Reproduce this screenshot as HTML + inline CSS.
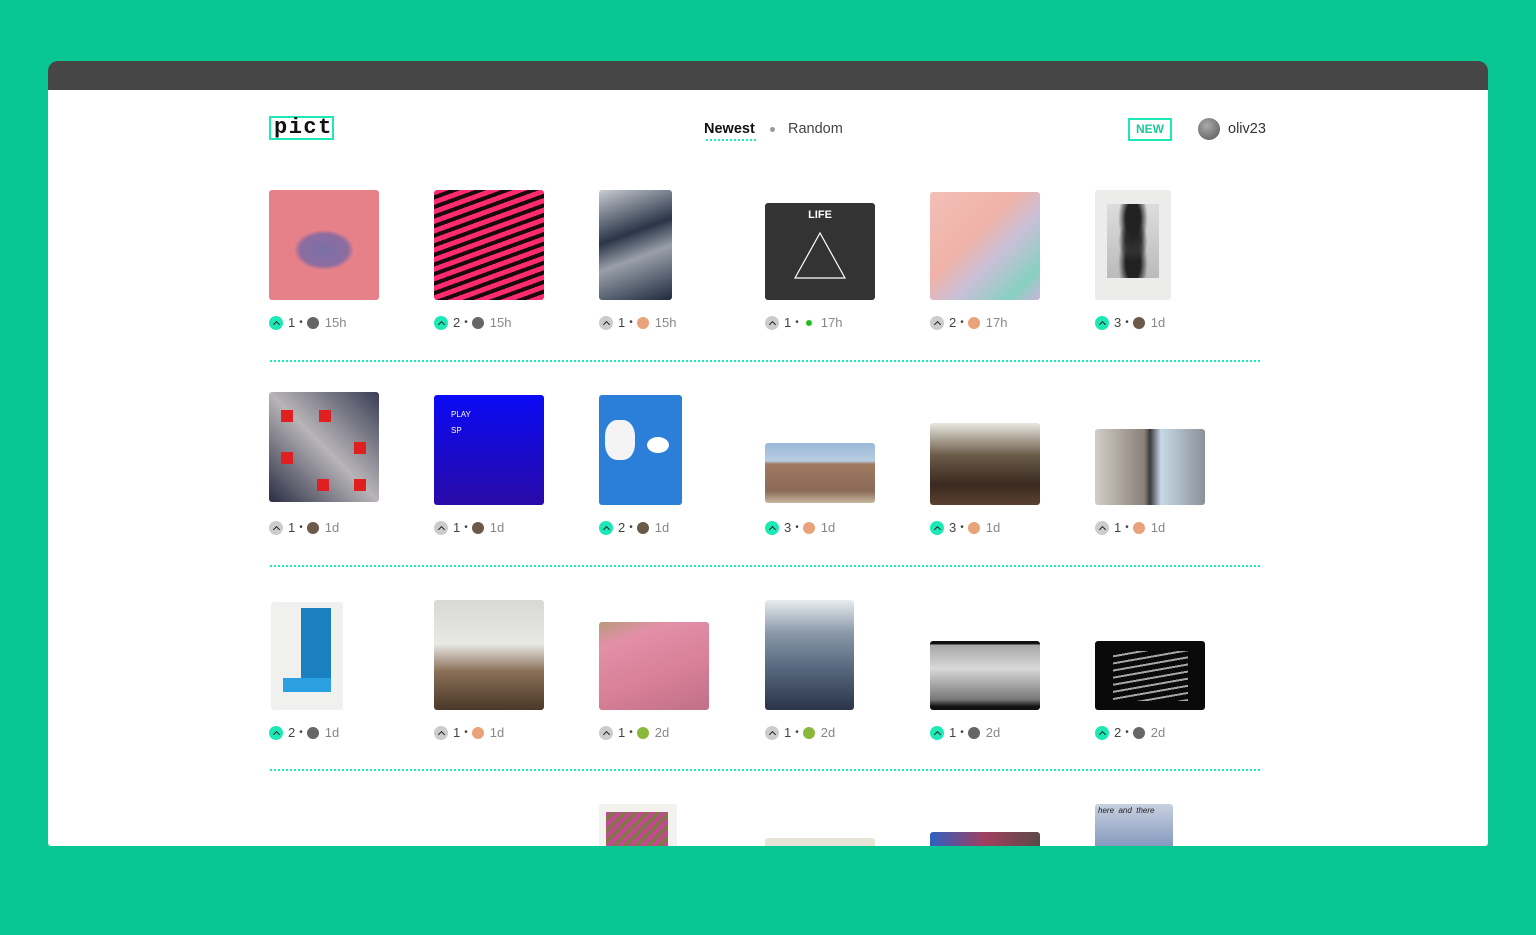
<!DOCTYPE html>
<html><head><meta charset="utf-8"><style>
*{margin:0;padding:0;box-sizing:border-box}
body{width:1536px;height:935px;background:#08c793;position:relative;overflow:hidden;font-family:"Liberation Sans",sans-serif}
#bar{position:absolute;left:48px;top:61px;width:1440px;height:30px;background:#464646;border-radius:10px 10px 0 0}
#win{position:absolute;left:48px;top:90px;width:1440px;height:756px;background:#fff;overflow:hidden;border-radius:0 0 3px 3px}
.a{position:absolute}
.logo{left:221px;top:26px;width:65px;height:24px;border:2px solid #1de9b6;font-family:"Liberation Mono",monospace;font-size:22px;line-height:19px;letter-spacing:1.5px;padding-left:3px;color:#111;font-weight:bold}
.nav{font-size:14.5px;top:31px;color:#444}
.img{position:absolute;border-radius:3px;overflow:hidden}
.m{position:absolute;font-size:13px;color:#444;height:16px;line-height:16px;display:flex;align-items:center}
.up{width:14px;height:14px;border-radius:50%;background:#ccc;display:inline-flex;align-items:center;justify-content:center;margin-right:5px}
.up.g{background:#1de9b6}
.up::after{content:"";width:4px;height:4px;border-left:1.5px solid #222;border-top:1.5px solid #222;transform:translateY(1px) rotate(45deg)}
.dt{margin:0 4px;font-size:10px}
.av{width:12px;height:12px;border-radius:50%;margin-right:6px}
.t{color:#888}
.hr{position:absolute;left:222px;width:990px;border-top:2px dotted #1de9b6}
</style></head><body>
<div id="bar"></div>
<div id="win">
<div class="a logo">pict</div>
<div class="a nav" style="left:656px;color:#111;font-weight:bold">Newest</div>
<div class="a" style="left:658px;top:49px;width:50px;border-top:2px dotted #1de9b6"></div>
<div class="a" style="left:722px;top:37px;width:5px;height:5px;border-radius:50%;background:#999"></div>
<div class="a nav" style="left:740px">Random</div>
<div class="a" style="left:1080px;top:28px;width:44px;height:23px;border:2px solid #1de9b6;color:#1dc99a;font-size:12px;font-weight:bold;text-align:center;line-height:19px">NEW</div>
<div class="a" style="left:1150px;top:28px;width:22px;height:22px;border-radius:50%;background:radial-gradient(circle at 40% 35%,#aaa,#555)"></div>
<div class="a nav" style="left:1180px;color:#333">oliv23</div>

<!-- row1 -->
<div class="img" style="left:221px;top:100px;width:110px;height:110px;background:radial-gradient(ellipse 30px 20px at 55px 60px,#7a6fa8 0,#8d6d9f 80%,#e68089 100%)"></div>
<div class="img" style="left:386px;top:100px;width:110px;height:110px;background:repeating-linear-gradient(160deg,#ff2b6e 0 5px,#1a0a10 5px 9px)"></div>
<div class="img" style="left:551px;top:100px;width:73px;height:110px;background:linear-gradient(160deg,#c8ccd2,#2a3548 40%,#9aa0aa 60%,#1e2a3e)"></div>
<div class="img" style="left:717px;top:113px;width:110px;height:97px;background:#333;color:#fff;text-align:center;font-size:11px;font-weight:bold;padding-top:6px">LIFE<svg width="110" height="70" style="display:block"><polygon points="55,12 30,57 80,57" fill="none" stroke="#fff" stroke-width="1.2"/></svg></div>
<div class="img" style="left:882px;top:102px;width:110px;height:108px;background:linear-gradient(135deg,#f2c0b8,#f0b2a8 40%,#c9c0d8 60%,#88d0c0 85%,#c8b6dc)"></div>
<div class="img" style="left:1047px;top:100px;width:76px;height:110px;background:#ececea"><div style="margin:14px 12px;height:74px;background:radial-gradient(ellipse at 50% 20%,#222 20%,transparent 40%),radial-gradient(ellipse at 50% 50%,#333 20%,transparent 40%),radial-gradient(ellipse at 50% 80%,#222 20%,transparent 40%),linear-gradient(#ddd,#bbb)"></div></div>
<div class="m" style="left:221px;top:225px"><span class="up g"></span>1<span class="dt">•</span><span class="av" style="background:#666"></span><span class="t">15h</span></div>
<div class="m" style="left:386px;top:225px"><span class="up g"></span>2<span class="dt">•</span><span class="av" style="background:#666"></span><span class="t">15h</span></div>
<div class="m" style="left:551px;top:225px"><span class="up"></span>1<span class="dt">•</span><span class="av" style="background:#e9a27a"></span><span class="t">15h</span></div>
<div class="m" style="left:717px;top:225px"><span class="up"></span>1<span class="dt">•</span><span class="av" style="background:radial-gradient(#2b2 30%,#fff 40%)"></span><span class="t">17h</span></div>
<div class="m" style="left:882px;top:225px"><span class="up"></span>2<span class="dt">•</span><span class="av" style="background:#e9a27a"></span><span class="t">17h</span></div>
<div class="m" style="left:1047px;top:225px"><span class="up g"></span>3<span class="dt">•</span><span class="av" style="background:#6b5a4a"></span><span class="t">1d</span></div>
<div class="hr" style="top:270px"></div>

<!-- row2 -->
<div class="img" style="left:221px;top:302px;width:110px;height:110px;background:linear-gradient(45deg,#2a2e44,#b8b4b8 50%,#3a3e55)"><div style="position:absolute;left:12px;top:18px;width:12px;height:12px;background:#e02020"></div><div style="position:absolute;left:50px;top:18px;width:12px;height:12px;background:#e02020"></div><div style="position:absolute;left:12px;top:60px;width:12px;height:12px;background:#e02020"></div><div style="position:absolute;left:85px;top:50px;width:12px;height:12px;background:#e02020"></div><div style="position:absolute;left:48px;top:87px;width:12px;height:12px;background:#e02020"></div><div style="position:absolute;left:85px;top:87px;width:12px;height:12px;background:#e02020"></div></div>
<div class="img" style="left:386px;top:305px;width:110px;height:110px;background:linear-gradient(#0a0af5,#2a0aa8);color:#fff;font-size:8px;padding:12px 17px;line-height:16px">PLAY<br>SP</div>
<div class="img" style="left:551px;top:305px;width:83px;height:110px;background:#2c7fd8"><div style="position:absolute;left:6px;top:25px;width:30px;height:40px;background:#f4f4f4;border-radius:40%"></div><div style="position:absolute;left:48px;top:42px;width:22px;height:16px;background:#fff;border-radius:50%"></div></div>
<div class="img" style="left:717px;top:353px;width:110px;height:60px;background:linear-gradient(#9ab8d8 0,#b8cde0 30%,#a07a60 35%,#8a6a58 80%,#c8b8a0)"></div>
<div class="img" style="left:882px;top:333px;width:110px;height:82px;background:linear-gradient(#e8e8e0,#6a5a48 40%,#3a2a20 75%,#5a4030)"></div>
<div class="img" style="left:1047px;top:339px;width:110px;height:76px;background:linear-gradient(90deg,#d0cec8,#8a8078 45%,#3a3a3a 50%,#c8d8e8 60%,#8a9098)"></div>
<div class="m" style="left:221px;top:430px"><span class="up"></span>1<span class="dt">•</span><span class="av" style="background:#6b5a4a"></span><span class="t">1d</span></div>
<div class="m" style="left:386px;top:430px"><span class="up"></span>1<span class="dt">•</span><span class="av" style="background:#6b5a4a"></span><span class="t">1d</span></div>
<div class="m" style="left:551px;top:430px"><span class="up g"></span>2<span class="dt">•</span><span class="av" style="background:#6b5a4a"></span><span class="t">1d</span></div>
<div class="m" style="left:717px;top:430px"><span class="up g"></span>3<span class="dt">•</span><span class="av" style="background:#e9a27a"></span><span class="t">1d</span></div>
<div class="m" style="left:882px;top:430px"><span class="up g"></span>3<span class="dt">•</span><span class="av" style="background:#e9a27a"></span><span class="t">1d</span></div>
<div class="m" style="left:1047px;top:430px"><span class="up"></span>1<span class="dt">•</span><span class="av" style="background:#e9a27a"></span><span class="t">1d</span></div>
<div class="hr" style="top:475px"></div>

<!-- row3 -->
<div class="img" style="left:223px;top:512px;width:72px;height:108px;background:#f0f0ee"><div style="position:absolute;left:30px;top:6px;width:30px;height:74px;background:#1a80c0"></div><div style="position:absolute;left:12px;top:76px;width:48px;height:14px;background:#2aa0e0"></div></div>
<div class="img" style="left:386px;top:510px;width:110px;height:110px;background:linear-gradient(#d8d8d4,#e8e8e4 40%,#8a7058 65%,#4a3828)"></div>
<div class="img" style="left:551px;top:532px;width:110px;height:88px;background:linear-gradient(160deg,#b89a7a,#e290a8 20%,#d88098 60%,#c07088)"></div>
<div class="img" style="left:717px;top:510px;width:89px;height:110px;background:linear-gradient(#e8ecf0,#8a98a8 30%,#5a6a80 60%,#2a3448)"></div>
<div class="img" style="left:882px;top:551px;width:110px;height:69px;background:linear-gradient(#111 4%,#a8a8a8 6%,#d8d8d8 40%,#777 85%,#111 95%)"></div>
<div class="img" style="left:1047px;top:551px;width:110px;height:69px;background:#0a0a0a"><div style="position:absolute;left:18px;top:10px;width:75px;height:50px;background:repeating-linear-gradient(-10deg,#ccc 0 2px,transparent 2px 7px);opacity:.8"></div></div>
<div class="m" style="left:221px;top:635px"><span class="up g"></span>2<span class="dt">•</span><span class="av" style="background:#666"></span><span class="t">1d</span></div>
<div class="m" style="left:386px;top:635px"><span class="up"></span>1<span class="dt">•</span><span class="av" style="background:#e9a27a"></span><span class="t">1d</span></div>
<div class="m" style="left:551px;top:635px"><span class="up"></span>1<span class="dt">•</span><span class="av" style="background:#8ab83a"></span><span class="t">2d</span></div>
<div class="m" style="left:717px;top:635px"><span class="up"></span>1<span class="dt">•</span><span class="av" style="background:#8ab83a"></span><span class="t">2d</span></div>
<div class="m" style="left:882px;top:635px"><span class="up g"></span>1<span class="dt">•</span><span class="av" style="background:#666"></span><span class="t">2d</span></div>
<div class="m" style="left:1047px;top:635px"><span class="up g"></span>2<span class="dt">•</span><span class="av" style="background:#666"></span><span class="t">2d</span></div>
<div class="hr" style="top:679px"></div>

<!-- row4 -->
<div class="img" style="left:551px;top:714px;width:78px;height:50px;background:#f4f2ee"><div style="position:absolute;left:7px;top:8px;width:62px;height:40px;background:repeating-linear-gradient(135deg,#d040a0 0 3px,#8a7050 3px 8px)"></div></div>
<div class="img" style="left:717px;top:748px;width:110px;height:20px;background:#e8e4d8"></div>
<div class="img" style="left:882px;top:742px;width:110px;height:20px;background:linear-gradient(90deg,#3060c0,#a04060 50%,#5a4a48)"></div>
<div class="img" style="left:1047px;top:714px;width:78px;height:50px;background:linear-gradient(#c8d0e0,#7890b8);font-size:8px;font-style:italic;padding:2px 3px;color:#222">here &nbsp;and&nbsp; there</div>
</div>
</body></html>
